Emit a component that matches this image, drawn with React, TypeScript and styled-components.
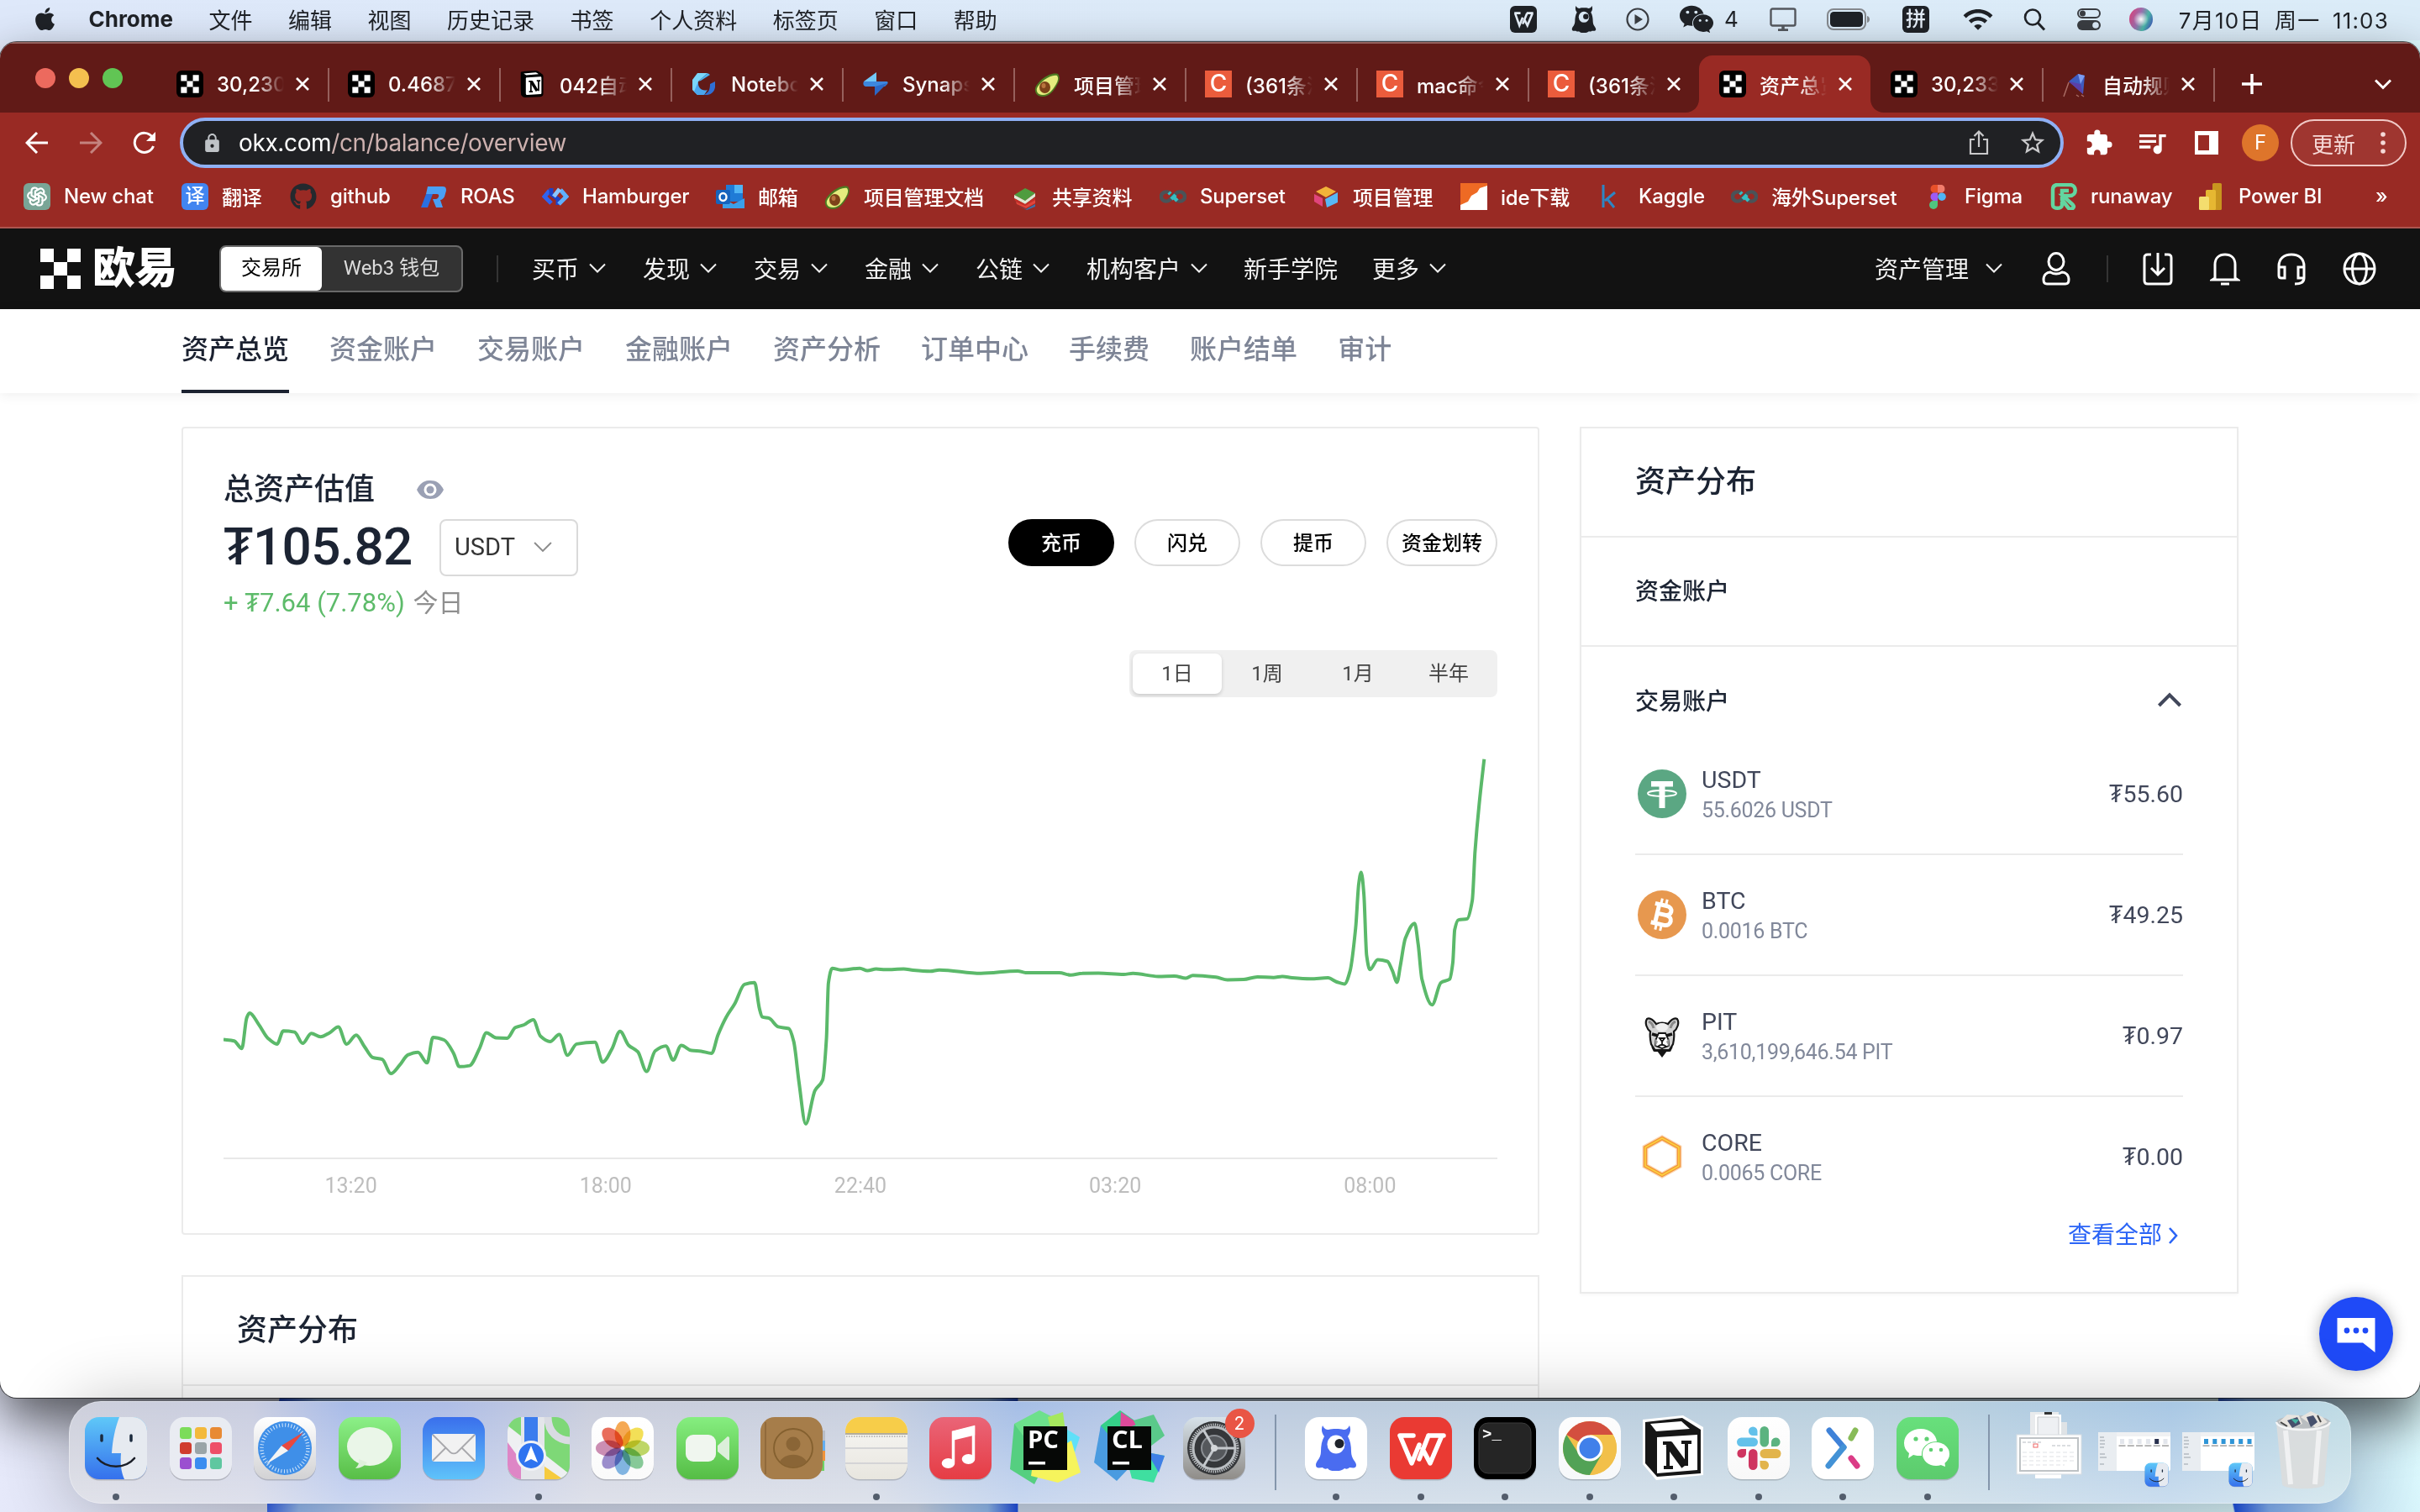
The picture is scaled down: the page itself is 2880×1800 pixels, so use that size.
import React from 'react';
import styled, { createGlobalStyle } from 'styled-components';
import { FaApple, FaGithub, FaWeixin } from 'react-icons/fa';
import { TbBrandOpenai } from 'react-icons/tb';
import { MdExtension, MdQueueMusic, MdStarBorder, MdLock, MdWifi } from 'react-icons/md';

const UI = `Inter, "Noto Sans CJK SC", sans-serif`;
const OKX = `Roboto, "Noto Sans CJK SC", "DejaVu Sans", sans-serif`;

const GlobalStyle = createGlobalStyle`
  * { box-sizing: border-box; }
  html, body { margin: 0; padding: 0; }
  body { width: 2880px; height: 1800px; overflow: hidden; font-family: ${UI}; }
  svg { display: block; flex: none; }
`;

/* ---------- desktop and menu bar ---------- */

const Desktop = styled.div`
  width: 2880px;
  height: 1800px;
  overflow: hidden;
  display: flex;
  flex-direction: column;
  background:
    linear-gradient(100deg, transparent 14px, #2350dd 15px, #8fb2e6 60px, #b9c9e8 150px, transparent 220px) 318px 1664px / 232px 136px no-repeat,
    linear-gradient(90deg, transparent, #8db4e6 70%, #1f4cd8 99%, transparent) 1090px 1664px / 122px 136px no-repeat,
    linear-gradient(78deg, transparent 18px, #1c4ed8 20px, #7eabec 60px, #c9e6f4 170px, transparent) 2640px 1664px / 240px 136px no-repeat,
    linear-gradient(90deg, #e6e9fa 0, #cfd3e4 300px, #c6cfe0 1000px, #becfe2 1500px, #bdd4e2 2400px, #d8f4f6 2800px, #dffcff 2880px);
`;

const MenuBar = styled.header`
  height: 48px;
  flex: none;
  display: flex;
  align-items: center;
  justify-content: space-between;
  padding: 0 37px 2px 38px;
  font-size: 26px;
  color: #1f2227;
  background: linear-gradient(90deg, #dee8fa, #dceaf8 50%, #dbecf8);
`;

const MenuGroup = styled.nav`
  display: flex;
  align-items: center;
  gap: 42.5px;
  padding-bottom: 2px;
`;

const MenuItem = styled.span<{ $bold?: boolean }>`
  white-space: nowrap;
  font-weight: ${p => (p.$bold ? 700 : 400)};
`;

const StatusGroup = styled.div`
  display: flex;
  align-items: center;
`;

const StatusSlot = styled.div<{ $w: number }>`
  width: ${p => p.$w}px;
  display: flex;
  align-items: center;
  justify-content: center;
`;

const UnreadCount = styled.span`
  width: 10px;
  margin: 0 9px 2px -9px;
  white-space: nowrap;
`;

const Clock = styled.span`
  width: 252px;
  margin-bottom: 2px;
  white-space: nowrap;
  letter-spacing: 1.2px;
  word-spacing: 6px;
  text-align: right;
`;

const StatusTile = styled.span`
  width: 32px;
  height: 32px;
  border-radius: 6px;
  background: #1f2227;
  color: #e6effa;
  font-size: 24px;
  font-weight: 500;
  line-height: 32px;
  text-align: center;
  display: block;
`;

/* ---------- browser window ---------- */

const Window = styled.main`
  height: 1614px;
  margin-top: 2px;
  flex: none;
  display: flex;
  flex-direction: column;
  border-radius: 20px;
  overflow: hidden;
  background: #fff;
  box-shadow: 0 0 0 1px rgba(20, 20, 20, 0.7), 0 26px 60px rgba(0, 0, 0, 0.62);
`;

const TabStrip = styled.div`
  height: 84px;
  flex: none;
  display: flex;
  align-items: flex-end;
  background: #611a17;
  box-shadow: inset 0 2px 0 #94625f;
`;

const Lights = styled.div`
  width: 186px;
  height: 86px;
  align-self: flex-start;
  display: flex;
  align-items: center;
  gap: 16px;
  padding-left: 42px;
`;

const Light = styled.span<{ $color: string }>`
  width: 24px;
  height: 24px;
  border-radius: 50%;
  background: ${p => p.$color};
`;

const TabBox = styled.div<{ $active?: boolean; $line?: boolean }>`
  position: relative;
  width: 204px;
  height: 68px;
  padding-left: 24px;
  display: flex;
  align-items: center;
  border-radius: 16px 16px 0 0;
  background: ${p => (p.$active ? '#992a24' : 'transparent')};
  color: #fff;
  &::after {
    content: '';
    position: absolute;
    right: -2px;
    top: 15px;
    width: 2px;
    height: 40px;
    background: ${p => (p.$line ? '#96605c' : 'transparent')};
  }
`;

const TabTitle = styled.span`
  width: 80px;
  margin: 0 -2px 0 16px;
  white-space: nowrap;
  font-size: 24px;
  font-weight: 500;
  mask-image: linear-gradient(90deg, #000 58%, transparent 100%);
`;

const TabClose = styled.span`
  width: 48px;
  display: flex;
  justify-content: center;
`;

const TabFoot = styled.svg<{ $side: 'left' | 'right' }>`
  position: absolute;
  bottom: 0;
  ${p => p.$side}: -16px;
  transform: ${p => (p.$side === 'right' ? 'scaleX(-1)' : 'none')};
`;

const StripButton = styled.span<{ $ml: number }>`
  height: 68px;
  display: flex;
  align-items: center;
  margin-left: ${p => p.$ml}px;
`;

const Toolbar = styled.div`
  height: 72px;
  flex: none;
  display: flex;
  align-items: center;
  padding: 0 16px 0 28px;
  background: #992a24;
`;

const NavIcon = styled.span`
  width: 32px;
  margin-right: 32px;
  display: flex;
  justify-content: center;
`;

const AddressBar = styled.div`
  width: 2242px;
  height: 60px;
  margin: 0 24px 0 -6px;
  display: flex;
  align-items: center;
  padding: 0 16px 0 22px;
  border: 4px solid #8fb0f4;
  border-radius: 30px;
  background: #202124;
  font-size: 28px;
  color: #fff;
  & > span { flex: 1; margin-left: 19px; letter-spacing: -0.37px; }
  & > span > em { font-style: normal; color: #cdb1af; }
`;

const AddressActions = styled.div`
  display: flex;
  align-items: center;
  gap: 31px;
`;

const ToolIcon = styled.span<{ $w: number }>`
  width: ${p => p.$w}px;
  display: flex;
  justify-content: center;
  color: #fff;
`;

const Avatar = styled.span`
  width: 44px;
  height: 44px;
  border-radius: 50%;
  background: #de752b;
  color: #fff;
  font-size: 24px;
  line-height: 44px;
  text-align: center;
`;

const UpdatePill = styled.div`
  width: 138px;
  height: 56px;
  margin-left: 14px;
  padding: 0 23px 0 23px;
  border: 2px solid #f0c9c6;
  border-radius: 28px;
  display: flex;
  align-items: center;
  justify-content: space-between;
  background: #9f3630;
  color: #f6dad8;
  font-size: 26px;
`;

const BookmarkBar = styled.div`
  height: 66px;
  flex: none;
  padding: 0 0 11px 28px;
  display: flex;
  align-items: center;
  background: #992a24;
  box-shadow: inset 0 -2px 0 #ad5550;
  color: #fff;
`;

const Bookmark = styled.div<{ $w: number }>`
  width: ${p => p.$w}px;
  flex: none;
  display: flex;
  align-items: center;
  gap: 16px;
  white-space: nowrap;
  font-size: 24px;
  font-weight: 500;
  letter-spacing: -0.2px;
`;

/* ---------- site header ---------- */

const SiteHeader = styled.div`
  height: 96px;
  flex: none;
  display: flex;
  align-items: center;
  padding-left: 48px;
  background: #121212;
  color: #fff;
  font-family: ${OKX};
`;

const BrandName = styled.span`
  width: 151px;
  margin-left: 14px;
  font-size: 51px;
  font-weight: 900;
  line-height: 50px;
  letter-spacing: -1px;
`;

const Switch = styled.div`
  width: 290px;
  height: 56px;
  border: 2px solid #6a6a6a;
  border-radius: 8px;
  display: flex;
  background: #333;
  font-size: 24px;
`;

const SwitchOption = styled.span<{ $on?: boolean }>`
  flex: ${p => (p.$on ? '0 0 120px' : '1')};
  line-height: 51px;
  text-align: center;
  border-radius: 6px;
  color: ${p => (p.$on ? '#000' : '#dcdcdc')};
  background: ${p => (p.$on ? '#fff' : 'transparent')};
`;

const HeaderRule = styled.span<{ $ml: number; $mr: number }>`
  width: 2px;
  height: 32px;
  margin: 0 ${p => p.$mr}px 0 ${p => p.$ml}px;
  background: #343434;
`;

const HeaderLink = styled.span<{ $w: number; $gap?: number }>`
  width: ${p => p.$w}px;
  flex: none;
  display: flex;
  align-items: center;
  gap: ${p => p.$gap ?? 12}px;
  padding-bottom: 2px;
  font-size: 28px;
  color: #f2f2f2;
  white-space: nowrap;
`;

const HeaderIcon = styled.span<{ $w: number }>`
  width: ${p => p.$w}px;
  display: flex;
  justify-content: center;
`;

const Spacer = styled.span`
  flex: 1;
`;

const SubNav = styled.nav`
  position: relative;
  height: 100px;
  flex: none;
  display: flex;
  gap: 48px;
  padding-left: 216px;
  background: #fff;
  box-shadow: 0 2px 14px rgba(0, 0, 0, 0.07);
  font-family: ${OKX};
`;

const SubNavItem = styled.span<{ $on?: boolean }>`
  height: 100px;
  line-height: 97px;
  font-size: 32px;
  font-weight: 500;
  color: ${p => (p.$on ? '#1b2130' : '#7e8596')};
  border-bottom: 4px solid ${p => (p.$on ? '#1b2130' : 'transparent')};
`;

/* ---------- content ---------- */

const Content = styled.section`
  position: relative;
  flex: 1;
  min-height: 0;
  display: flex;
  align-items: flex-start;
  gap: 48px;
  padding: 40px 0 0 216px;
  font-family: ${OKX};
  color: #1c2433;
`;

const LeftColumn = styled.div`
  width: 1616px;
  display: flex;
  flex-direction: column;
  gap: 48px;
`;

const Card = styled.div`
  border: 2px solid #ebebeb;
  border-radius: 4px;
  background: #fff;
`;

const OverviewCard = styled(Card)`
  height: 962px;
  padding: 46px 48px 0;
`;

const OverviewTop = styled.div`
  display: flex;
  justify-content: space-between;
  height: 218px;
`;

const TitleRow = styled.div`
  display: flex;
  align-items: center;
  gap: 50px;
  height: 52px;
  padding-bottom: 7px;
  font-size: 36px;
  font-weight: 500;
  & > svg { margin-top: 8px; }
`;

const AmountRow = styled.div`
  display: flex;
  align-items: center;
  height: 68px;
  margin-top: 10px;
`;

const Amount = styled.span`
  width: 257px;
  padding-bottom: 8px;
  font-size: 62px;
  font-weight: 500;
  letter-spacing: -0.6px;
  white-space: nowrap;
`;

const Tugrik = styled.span`
  font-family: "Noto Sans", "DejaVu Sans", sans-serif;
`;

const CurrencySelect = styled.div`
  width: 165px;
  height: 68px;
  padding: 0 29px 2px 16px;
  border: 2px solid #dadada;
  border-radius: 8px;
  display: flex;
  align-items: center;
  justify-content: space-between;
  font-size: 29px;
  color: #333;
`;

const Change = styled.div`
  margin-top: 12px;
  font-size: 31px;
  line-height: 36px;
  color: #5dbb6a;
  & > span:last-child { margin-left: 2px; font-size: 30px; color: #8f8f8f; }
`;

const Actions = styled.div`
  display: flex;
  gap: 24px;
  margin-top: 62px;
`;

const ActionButton = styled.button<{ $primary?: boolean; $w: number }>`
  width: ${p => p.$w}px;
  height: 56px;
  padding: 0 0 4px;
  border-radius: 28px;
  border: 2px solid ${p => (p.$primary ? '#000' : '#dcdcdc')};
  background: ${p => (p.$primary ? '#000' : '#fff')};
  color: ${p => (p.$primary ? '#fff' : '#000')};
  font: 500 24px ${OKX};
`;

const Periods = styled.div`
  width: 438px;
  height: 56px;
  margin-left: auto;
  padding: 4px;
  border-radius: 8px;
  display: flex;
  background: #f0f0f0;
`;

const Period = styled.span<{ $on?: boolean }>`
  flex: ${p => (p.$on ? '0 0 106px' : '1')};
  height: 48px;
  line-height: 48px;
  text-align: center;
  font-size: 24px;
  color: #434343;
  border-radius: 8px;
  background: ${p => (p.$on ? '#fff' : 'transparent')};
  box-shadow: ${p => (p.$on ? '0 2px 4px rgba(0,0,0,0.16)' : 'none')};
`;

const ChartArea = styled.div`
  height: 548px;
  border-bottom: 2px solid #e8e8e8;
  margin-top: 2px;
`;

const Axis = styled.div`
  display: flex;
  justify-content: space-around;
  padding-top: 15px;
  font-size: 25px;
  line-height: 34px;
  color: #bdbdbd;
`;

const DistributionCard = styled(Card)`
  height: 240px;
  border-radius: 0;
`;

const CardTitle = styled.div<{ $pl: number }>`
  height: 130px;
  padding-left: ${p => p.$pl}px;
  line-height: 129px;
  border-bottom: 2px solid #ebebeb;
  font-size: 36px;
  font-weight: 500;
`;

const AccountsCard = styled(Card)`
  width: 784px;
  height: 1032px;
  border-radius: 0;
  box-shadow: 0 2px 4px rgba(0, 0, 0, 0.03);
`;

const AccountHead = styled.div<{ $line?: boolean }>`
  height: 130px;
  padding: 0 66px 4px 64px;
  display: flex;
  align-items: center;
  justify-content: space-between;
  border-bottom: ${p => (p.$line ? '2px solid #ebebeb' : 'none')};
  font-size: 28px;
  font-weight: 500;
`;

const AssetList = styled.div`
  margin: -26px 64px 0;
`;

const AssetRow = styled.div<{ $last?: boolean }>`
  height: 144px;
  display: flex;
  align-items: center;
  padding-left: 2px;
  border-bottom: 2px solid ${p => (p.$last ? 'transparent' : '#ebebeb')};
  color: #41475a;
`;

const AssetNames = styled.div`
  flex: 1;
  margin: 3px 0 0 17px;
  display: flex;
  flex-direction: column;
  font-size: 28.5px;
  line-height: 36px;
  & > small { font-size: 25px; color: #81889a; letter-spacing: -0.3px; }
`;

const AssetValue = styled.span`
  padding-bottom: 3px;
  font-size: 28.5px;
`;

const ViewAll = styled.div`
  display: flex;
  align-items: center;
  justify-content: flex-end;
  gap: 7px;
  margin: -1px 70px 0 0;
  font-size: 28px;
  line-height: 44px;
  color: #2a64f6;
`;

const ChatBubble = styled.div`
  position: absolute;
  left: 2760px;
  top: 1076px;
  width: 88px;
  height: 88px;
  border-radius: 50%;
  background: #1f4af7;
  box-shadow: 0 0 18px rgba(0, 0, 0, 0.28);
  display: flex;
  align-items: center;
  justify-content: center;
`;

/* ---------- dock ---------- */

const DockBar = styled.footer`
  position: relative;
  width: 2716px;
  height: 122px;
  margin: 4px 0 0 82px;
  flex: none;
  padding: 0 6px;
  display: flex;
  border-radius: 38px;
  background:
    linear-gradient(180deg, rgba(255,255,255,0) 0%, rgba(255,255,255,0.4) 100%),
    linear-gradient(90deg, #cdcfdb 0, #c9cde0 220px, #a8bbe8 330px, #aebde6 450px, #c9cddc 620px, #c8cfde 950px, #a5bee6 1130px, #bccae4 1320px, #bccbde 1450px, #b9d0de 2200px, #a8c7e4 2500px, #bfdbe4 2716px);
  box-shadow: 0 0 80px rgba(0, 0, 0, 0.24), inset 0 0 0 1px rgba(255, 255, 255, 0.35);
`;

const DockSlot = styled.div`
  position: relative;
  width: 100.5px;
  height: 122px;
  padding-top: 15px;
  flex: none;
  display: flex;
  flex-direction: column;
  align-items: center;
  & > svg { overflow: visible; }
`;

const RunningDot = styled.i`
  width: 8px;
  height: 8px;
  margin-top: 13px;
  border-radius: 50%;
  background: #535d6c;
`;

const DockRule = styled.div`
  width: 45px;
  flex: none;
  display: flex;
  justify-content: center;
  padding: 16px 0;
  &::before { content: ''; width: 2px; background: #8496ac; }
`;

const DockBadge = styled.span`
  position: absolute;
  left: 63px;
  top: 9px;
  width: 35px;
  height: 35px;
  border-radius: 50%;
  background: #e95545;
  color: #fff;
  font-size: 21px;
  line-height: 35px;
  text-align: center;
`;

/* ---------- small drawings ---------- */

const Chevron = ({ size = 20, color = '#f2f2f2', width = 2, dir = 'down' }: { size?: number; color?: string; width?: number; dir?: 'down' | 'up' }) => (
  <svg width={size} height={size} viewBox="0 0 20 20">
    <path d={dir === 'down' ? 'M1 5.5 10 14.5 19 5.5' : 'M1 15 10 6 19 15'} fill="none" stroke={color} strokeWidth={(width * 20) / size} />
  </svg>
);

const Checker = ({ size, box }: { size: number; box?: boolean }) => (
  <svg width={size} height={size} viewBox={box ? '-6 -6 36 36' : '0 0 24 24'}>
    {box && <rect x="-6" y="-6" width="36" height="36" rx="7" fill="#000" />}
    <path d="M0 0h8v8H0zM16 0h8v8h-8zM8 8h8v8H8zM0 16h8v8H0zM16 16h8v8h-8z" fill="#fff" />
  </svg>
);

const NotionMark = () => (
  <svg width="32" height="32" viewBox="0 0 74 74">
    <path d="M4 6C4 3 8 2 44 0c6 0 8 2 18 9 4 3 4 4 4 8v46c0 6-2 8-8 9l-42 2c-5 0-8-3-11-7C5 61 4 58 4 52z" fill="#000" />
    <path d="M12 8 44 5c3 0 5 1 9 5l-34 3zM18 22c0-2 1-3 4-3l36-2c2 0 3 1 3 3v42c0 2-1 3-3 3l-36 2c-3 0-4-1-4-4z" fill="#fff" />
    <path d="M33 30l16 26" stroke="#000" strokeWidth="8" />
    <path d="M32 29v29M27 58h10M48 28h10M53 28v28M26 30h9" fill="none" stroke="#000" strokeWidth="4" />
  </svg>
);

const NoteMark = () => (
  <svg width="32" height="32" viewBox="0 0 32 32">
    <path d="M8 3h12L9 13c-1 5 0 9 5 11l-2 5H8L2 23V11z" fill="#7ad6fa" />
    <path d="M20 3 9 13l3-1 11-7z" fill="#4cb2f0" />
    <path d="M9 13c-1 8 5 12 11 10l-4 6H8L4 25z" fill="#4aa6ee" />
    <path d="M29 13v7c-1 5-4 8-9 9h-5c6-2 8-6 8-13z" fill="#2f6fd4" />
  </svg>
);

const BoltMark = () => (
  <svg width="32" height="32" viewBox="0 0 32 32">
    <path d="M17 2v12H3l-1-1z" fill="#72c8f8" />
    <path d="M2 13h27c2 0 2 2 1 3l-3 3H4c-3-1-3-4-2-6z" fill="#3d87de" />
    <path d="M30 15 15 30V19z" fill="#2c68c6" />
  </svg>
);

const Avocado = () => (
  <svg width="32" height="32" viewBox="0 0 32 32">
    <path d="M29 4c3 4 2 8-1 13-4 8-10 14-17 14C4 31 1 26 2 21 5 12 20 1 29 4z" fill="#4d7a22" />
    <path d="M28 6c2 3 1 6-1 10-4 7-9 13-16 13-6 0-8-4-7-8C7 14 20 4 28 6z" fill="#e5ec7e" />
    <ellipse cx="13.500" cy="20" rx="6.500" ry="7" fill="#7d4219" />
    <ellipse cx="12" cy="18" rx="2.500" ry="3" fill="#b9743e" />
  </svg>
);

const LetterTile = styled.span<{ $bg: string; $size?: number; $radius?: number }>`
  width: 32px;
  height: 32px;
  flex: none;
  border-radius: ${p => p.$radius ?? 0}px;
  background: ${p => p.$bg};
  color: #fff;
  font-size: ${p => p.$size ?? 26}px;
  font-weight: 500;
  line-height: 31px;
  text-align: center;
  & > svg { margin: 3px; }
`;

const Kite = () => (
  <svg width="32" height="32" viewBox="0 0 32 32">
    <path d="M19 4 27 6 25 28 8 13z" fill="#3e5cc0" />
    <path d="M19 4l8 2-5 10z" fill="#7c9cf0" />
    <path d="M8 13l14 3 3 12z" fill="#5a3fa8" />
    <path d="M8 14 2 31M17 29l3 2M23 29l3 2" stroke="#a86a62" strokeWidth="1.500" fill="none" />
  </svg>
);

const CloseX = () => (
  <svg width="18" height="18" viewBox="0 0 18 18">
    <path d="M2 2l14 14M16 2 2 16" stroke="#fff" strokeWidth="2.600" />
  </svg>
);

const RMark = () => (
  <svg width="32" height="32" viewBox="0 0 32 32">
    <path d="M9 4h18c4 0 4 3 4 5l-2 7c-1 2-3 4-5 4l3 9h-8l-4-10h4c3 0 5-6 1-6H7z" fill="#4aa0f5" />
    <path d="M7 13h8L9 29H1z" fill="#2a6fe0" />
  </svg>
);

const Braid = () => (
  <svg width="32" height="32" viewBox="0 0 32 32" fill="none" strokeWidth="5">
    <path d="M9 9 3 16l8 8" stroke="#2f62ef" />
    <path d="M11 6v7l8 6v7" stroke="#1d43c8" />
    <path d="M22 8l7 8-9 9" stroke="#5fb0ff" />
    <path d="M21 7l-7 9" stroke="#8ac6ff" />
  </svg>
);

const Outlook = () => (
  <svg width="34" height="32" viewBox="0 0 34 32">
    <path d="M12 2h20v20H12z" fill="#1f7bd6" />
    <path d="M22 2h10v10H22z" fill="#4fb4f4" />
    <path d="M8 18l13 7 13-7v12H8z" fill="#3ba0ea" />
    <rect y="8" width="17" height="17" rx="2" fill="#1664bd" />
    <ellipse cx="8.500" cy="16.500" rx="4" ry="4.500" fill="none" stroke="#fff" strokeWidth="2.400" />
  </svg>
);

const Books = () => (
  <svg width="32" height="32" viewBox="0 0 32 32">
    <path d="M3 14 16 6l12 6-12 9z" fill="#4f9c3f" />
    <path d="M3 14v4l13 7 12-9v-4l-12 9z" fill="#dfe9d6" />
    <path d="M3 18l13 7 12-8v3l-12 7L4 21z" fill="#c52f28" />
    <path d="M5 22l11 5 12-7v4l-11 6-11-5z" fill="#e2443a" />
    <path d="M8 27l9 4 11-6v3l-10 4z" fill="#3d6fa8" />
  </svg>
);

const Infinity2 = () => (
  <svg width="32" height="32" viewBox="0 0 32 32" fill="none" strokeWidth="4.500">
    <path d="M12 12a6 5.500 0 1 0 0 8l8-8a6 5.500 0 1 1 0 8" stroke="#4a5358" />
    <path d="M13 13l-2-2M21 21l-3-3M14 19l5-5" stroke="#35bfc4" />
  </svg>
);

const Cubes = () => (
  <svg width="32" height="32" viewBox="0 0 32 32">
    <path d="M16 4l12 6-12 7L4 10z" fill="#f2b33a" />
    <path d="M2 13l10 5v10L2 22z" fill="#e0457c" />
    <path d="M15 19l15-8v12l-13 6z" fill="#58b8f5" />
  </svg>
);

const PeaksMark = () => (
  <svg width="32" height="32" viewBox="0 0 32 32">
    <path d="M0 0h32v32H0z" fill="#ee6a24" />
    <path d="M0 32V26l9-4 4-7 7-4 3-5 9-3v29z" fill="#fff" />
  </svg>
);

const KaggleK = () => (
  <svg width="32" height="32" viewBox="0 0 32 32" fill="none" stroke="#2d86c4" strokeWidth="3">
    <path d="M6 2v27M20 11 8 21M10 18l9 11" />
  </svg>
);

const FigmaMark = () => (
  <svg width="32" height="32" viewBox="0 0 32 32">
    <path d="M16 2h-5a5 5 0 0 0 0 9.500h5z" fill="#e8512a" />
    <path d="M16 2h5a5 5 0 0 1 0 9.500h-5z" fill="#f27c6b" />
    <path d="M16 11.500h-5a5 5 0 0 0 0 9.500h5z" fill="#9d5bf5" />
    <circle cx="21" cy="16.200" r="4.800" fill="#4fb4f5" />
    <path d="M16 21h-5a5 5 0 1 0 5 5z" fill="#4fc47f" />
  </svg>
);

const RunwayMark = () => (
  <svg width="32" height="32" viewBox="0 0 32 32" fill="none" stroke="#62d6a0" strokeWidth="4.500">
    <path d="M14 22v4c0 5-11 5-11 0V8c0-4 2-6 6-6h14c9 0 9 13 0 13h-8l12 11c3 3-2 6-5 4L14 20V9h8" />
  </svg>
);

const PowerBi = () => (
  <svg width="32" height="32" viewBox="0 0 32 32">
    <rect x="17" y="0" width="11" height="32" rx="1.500" fill="#c8951f" />
    <rect x="9" y="8" width="12" height="24" rx="1.500" fill="#e6b732" />
    <rect x="1" y="16" width="12" height="16" rx="1.500" fill="#f4dd6e" />
  </svg>
);

const Monster = ({ size, color, eye }: { size: number; color: string; eye: string }) => (
  <svg width={size} height={size} viewBox="0 0 54 54">
    <path d="M11 0c2 4 4 5 7 5 3-1 5-1 9-1s6 0 9 1c3 0 5-1 7-5 2 5 1 9-2 13 3 5 4 11 4 18 0 9 6 12 6 16 0 5-5 3-8 3-2 2-4 2-6 1-3 4-17 5-20 0-2 1-4 1-6-1-3 0-8 2-8-3s6-7 6-16c0-7 1-13 4-18-3-4-4-8-2-13z" fill={color} />
    <ellipse cx="27" cy="22.500" rx="10.500" ry="11" fill={eye} />
    <ellipse cx="31" cy="21.500" rx="5.500" ry="5.500" fill={color === '#1f2227' ? color : '#20242c'} />
  </svg>
);

/* ---------- chart ---------- */

type Point = [number, number];

const toPixels = (x0: number, unit: number, pts: Point[]): Point[] =>
  pts.map(([t, v]) => [x0 + t / unit, v / 2.45 + 28]);

const series: Point[] = [
  ...toPixels(-66, 1.742, [
    [115, 925], [137, 929], [153, 951], [163, 862], [169, 848], [188, 881], [207, 921], [226, 938], [239, 900], [262, 903],
    [279, 936], [297, 907], [316, 917], [335, 905], [353, 888], [370, 938], [390, 912], [407, 945], [424, 977], [444, 983],
    [462, 1024], [480, 1000], [497, 970], [518, 962], [537, 993], [549, 919], [572, 926], [592, 965], [604, 1004], [625, 1001],
    [646, 950], [660, 905], [680, 920], [703, 921], [720, 890], [738, 882], [757, 867], [772, 915], [792, 931], [811, 910],
    [828, 971], [847, 938], [885, 933], [901, 991], [920, 953], [937, 901], [955, 942], [974, 961], [992, 1018], [1010, 958],
    [1032, 944], [1047, 985], [1064, 942], [1085, 957], [1105, 959], [1127, 965], [1140, 912], [1157, 860], [1175, 820],
    [1195, 764], [1216, 759], [1226, 835], [1232, 859], [1246, 863], [1265, 888], [1287, 893], [1297, 930], [1308, 1050],
    [1322, 1171], [1341, 1074], [1357, 1043], [1365, 920], [1369, 760], [1377, 717], [1394, 722], [1434, 717], [1450, 724],
    [1468, 719], [1487, 721], [1525, 719], [1545, 723],
  ]),
  ...toPixels(734, 1.823, [
    [195, 726], [215, 722], [305, 732], [385, 725], [402, 730], [475, 730], [500, 737], [525, 732], [560, 731], [615, 735],
    [635, 732], [690, 741], [725, 740], [750, 746], [765, 738], [815, 743], [840, 751], [875, 750], [905, 742], [940, 744],
    [960, 741], [980, 745], [1020, 748], [1058, 745], [1077, 757], [1094, 763], [1106, 725], [1118, 600], [1125, 470],
    [1130, 437], [1136, 500], [1142, 680], [1149, 721], [1166, 692], [1187, 697], [1198, 725], [1208, 758], [1215, 710],
    [1226, 630], [1246, 586], [1254, 650], [1262, 750], [1284, 824], [1303, 759], [1322, 749], [1329, 700], [1333, 605],
    [1341, 576], [1360, 573], [1371, 520], [1377, 380], [1386, 240], [1397, 107],
  ]),
];

/* Monotone cubic interpolation, so peaks never overshoot their samples. */
const smoothPath = (pts: Point[]): string => {
  const n = pts.length;
  const slope = (i: number) => (pts[i + 1][1] - pts[i][1]) / (pts[i + 1][0] - pts[i][0]);
  const tangent = (i: number) => {
    if (i === 0) return slope(0);
    if (i === n - 1) return slope(n - 2);
    const a = slope(i - 1);
    const b = slope(i);
    return a * b <= 0 ? 0 : (2 * a * b) / (a + b);
  };
  let d = `M${pts[0][0].toFixed(1)} ${pts[0][1].toFixed(1)}`;
  for (let i = 0; i < n - 1; i++) {
    const [x0, y0] = pts[i];
    const [x1, y1] = pts[i + 1];
    const h = (x1 - x0) / 3;
    const c = [x0 + h, y0 + h * tangent(i), x1 - h, y1 - h * tangent(i + 1), x1, y1];
    d += `C${c.map(v => v.toFixed(1)).join(' ')}`;
  }
  return d;
};

const Chart = () => (
  <svg width="1516" height="540" viewBox="0 0 1516 540">
    <path d={smoothPath(series)} fill="none" stroke="#5bb96a" strokeWidth="4" strokeLinejoin="round" />
  </svg>
);

/* ---------- coin icons ---------- */

const Tether = () => (
  <svg width="60" height="60" viewBox="0 0 60 60">
    <circle cx="30" cy="30" r="29" fill="#5ba783" />
    <path d="M17 15h26v6.500h-9.500V47h-7V21.500H17z" fill="#fff" />
    <ellipse cx="30" cy="29.500" rx="17" ry="3.500" fill="none" stroke="#fff" strokeWidth="1.800" />
  </svg>
);

const Bitcoin = () => (
  <svg width="60" height="60" viewBox="0 0 60 60">
    <circle cx="30" cy="30" r="29" fill="#e7984f" />
    <g transform="rotate(13 30 30)" fill="none" stroke="#fff">
      <path d="M19 18.500h14c9 0 9 11 0 11H24M24 29.500h11c9 0 9 12 0 12H19M24 18.500v23" strokeWidth="5" />
      <path d="M26 11v7M32 11v7M26 42v7M32 42v7" strokeWidth="3" />
    </g>
  </svg>
);

const PitDog = () => (
  <svg width="60" height="60" viewBox="0 0 60 60">
    <path d="M12 10c4-2 8 2 11 6 4-2 10-2 14 0 3-4 7-8 11-6 3 5 0 12-4 15 1 6 0 10-1 15l-5 8H22l-5-8c-1-5-2-9-1-15-4-3-7-10-4-15z" fill="#d2d2d2" stroke="#151515" strokeWidth="2.200" />
    <path d="M14 13c3 1 5 4 6 8M46 13c-3 1-5 4-6 8" stroke="#8a8a8a" strokeWidth="3" fill="none" />
    <ellipse cx="30" cy="20" rx="7" ry="5" fill="#efefef" />
    <path d="M18 28l7 2M42 28l-7 2" stroke="#151515" strokeWidth="3.500" />
    <path d="M26 27h8l4 9v6l-8 3-8-3v-6z" fill="#fff" stroke="#151515" strokeWidth="1.800" />
    <path d="M21 33l4 4-3 6zM39 33l-4 4 3 6z" fill="#999" />
    <path d="M27 33h6l-3 4zM30 37v4M25 43c3-3 7-3 10 0" fill="none" stroke="#151515" strokeWidth="1.800" />
    <path d="M17 43l3 6 4-1 3 4 3 4 3-4 3-4 4 1 3-6-5 3H22z" fill="#151515" />
  </svg>
);

const CoreCoin = () => (
  <svg width="60" height="60" viewBox="0 0 60 60" fill="none">
    <path d="M30 8 50 19v22L30 52 10 41V19z" stroke="#fbd9b8" strokeWidth="7" />
    <path d="M30 8 50 19v22L30 52 10 41V19z" stroke="#f3973a" strokeWidth="4.500" />
    <path d="M30 8 50 19v22L30 52 10 41V19z" stroke="#fbd03f" strokeWidth="1.600" />
  </svg>
);

/* ---------- dock icons ---------- */

const Tile = ({ id, from, to, children }: { id: string; from: string; to: string; children?: React.ReactNode }) => (
  <svg width="82" height="82" viewBox="-4 0 82 82">
    <defs>
      <linearGradient id={id} x1="0" y1="0" x2="0" y2="1">
        <stop offset="0" stopColor={from} />
        <stop offset="1" stopColor={to} />
      </linearGradient>
      <clipPath id={`${id}-clip`}><rect y="4" width="74" height="74" rx="17" /></clipPath>
    </defs>
    <rect y="5.500" width="74" height="74" rx="17" fill="rgba(0,0,0,0.18)" />
    <rect y="4" width="74" height="74" rx="17" fill={`url(#${id})`} />
    <g clipPath={`url(#${id}-clip)`}><g transform="translate(0 4)">{children}</g></g>
  </svg>
);

const FinderFace = ({ id }: { id: string }) => (
  <Tile id={id} from="#5fc8f8" to="#3570ec">
    <path d="M41 0C36 13 33 27 32 43h11c-1 12 0 22 4 31h27V0z" fill="#e6eaf0" />
    <path d="M20 22v6M55 22v6" stroke="#1b2a3d" strokeWidth="3.500" strokeLinecap="round" />
    <path d="M15 49c11 13 33 13 44 0" fill="none" stroke="#1b1f28" strokeWidth="2.600" strokeLinecap="round" />
  </Tile>
);

const launchColors = ['#7cdc5a', '#f3b93c', '#e88a34', '#d03c2e', '#9aa4a8', '#ee4f68', '#9b4fd0', '#3b8cf0', '#5fc7a0'];
const Launchpad = () => (
  <Tile id="launch" from="#e9ecf2" to="#e9ebf2">
    {launchColors.map((c, i) => (
      <rect key={c} x={12 + (i % 3) * 18} y={12 + Math.floor(i / 3) * 18} width="14" height="14" rx="3.500" fill={c} />
    ))}
  </Tile>
);

const Safari = () => (
  <Tile id="safari" from="#ffffff" to="#d2d2d4">
    <circle cx="37" cy="37" r="32" fill="#3f8fe8" />
    <circle cx="37" cy="37" r="27.500" fill="none" stroke="#d7e9fb" strokeWidth="4.500" strokeDasharray="1 2.600" />
    <path d="M59 18 33 34l8 6z" fill="#e8483e" />
    <path d="M15 56l18-22 8 6z" fill="#f4f4f4" />
  </Tile>
);

const Messages = () => (
  <Tile id="messages" from="#8cf088" to="#58be47">
    <ellipse cx="37" cy="35" rx="27" ry="23" fill="#eaf6e8" />
    <path d="M24 50c1 5-1 8-4 11 6 0 11-3 14-7z" fill="#dff0dc" />
  </Tile>
);

const Mail = () => (
  <Tile id="mail" from="#3a6fec" to="#5fc3fa">
    <rect x="11" y="20" width="52" height="33" rx="3" fill="#f2f2f2" />
    <path d="M12 21 33 42c3 2 5 2 8 0l21-21M12 52l16-16M62 52 46 36" fill="none" stroke="#a8a8ac" strokeWidth="1.800" />
  </Tile>
);

const Maps = () => (
  <Tile id="maps" from="#7ed877" to="#7ed877">
    <path d="M0 10 74 68v6H0z" fill="#eef0f2" />
    <path d="M0 30 32 74H0z" fill="#de86c6" />
    <path d="M40 56l26 18H40z" fill="#f6cb3f" />
    <path d="M16 0h28v74H16z" fill="#e4e6ea" />
    <path d="M20 0h16v45H20z" fill="#3b7cee" />
    <path d="M48 0c0 18 12 28 28 28" fill="none" stroke="#d9dbe2" strokeWidth="9" />
    <circle cx="28" cy="46" r="18" fill="#f0f2f6" />
    <circle cx="28" cy="46" r="15" fill="#2f74f0" />
    <path d="M28 34l8 20-8-4-8 4z" fill="#fff" />
  </Tile>
);

const petals = ['#f39a37', '#f1d93a', '#b3cf4c', '#72bf86', '#6ba7dc', '#8a79c3', '#c27aa6', '#e5553f'];
const Petal = styled.ellipse`
  mix-blend-mode: multiply;
`;
const Photos = () => (
  <Tile id="photos" from="#ffffff" to="#fafafa">
    {petals.map((c, i) => (
      <Petal key={c} cx="37" cy="20" rx="9.500" ry="15" fill={c} fillOpacity="0.85" transform={`rotate(${i * 45} 37 37)`} />
    ))}
  </Tile>
);

const FaceTime = () => (
  <Tile id="facetime" from="#86ee80" to="#55bd45">
    <rect x="11" y="21" width="36" height="32" rx="9" fill="#f0f6ef" />
    <path d="M49 34 61 23c1 0 2 1 2 2v25c0 1-1 2-2 1L49 41z" fill="#dcefda" />
  </Tile>
);

const Contacts = () => (
  <svg width="82" height="82" viewBox="-4 0 82 82">
    <path d="M68 20h9v16h-9z" fill="#b8bdc6" /><path d="M68 32h9v14h-9z" fill="#63aef0" />
    <path d="M68 44h9v12h-9z" fill="#f0933a" /><path d="M68 56h8v12h-8z" fill="#6fd364" />
    <rect y="4" width="74" height="74" rx="17" fill="#a67d4a" />
    <path d="M6 10v62" stroke="#8a6538" strokeWidth="1.500" />
    <circle cx="39" cy="41" r="23" fill="none" stroke="#84602f" strokeWidth="1.800" />
    <circle cx="39" cy="36" r="8.500" fill="#8a6536" />
    <path d="M23 57c6-11 26-11 32 0-8 9-24 9-32 0z" fill="#8a6536" />
  </svg>
);

const Notes = () => (
  <Tile id="notes" from="#f8f7f5" to="#e8e6df">
    <path d="M0 0h74v19H0z" fill="#f7cd49" />
    <path d="M0 20h74" stroke="#9c9480" strokeWidth="1.500" />
    <path d="M1 23h72" stroke="#aaa" strokeWidth="1.500" strokeDasharray="1.500 1.500" />
    <path d="M0 37h74M0 55h74" stroke="#d4d4d6" strokeWidth="1.800" />
  </Tile>
);

const Music = () => (
  <Tile id="music" from="#ea6578" to="#e63c44">
    <path d="M28.500 54V18l24-6v37" fill="none" stroke="#fff" strokeWidth="3.500" />
    <path d="M27 17 54.200 10.500v11L27 28z" fill="#fff" />
    <ellipse cx="22.500" cy="55" rx="7.800" ry="6" fill="#fff" />
    <ellipse cx="46.500" cy="50" rx="7.800" ry="6" fill="#fff" />
  </Tile>
);

const JetBrains = ({ label, shards }: { label: string; shards: [string, string][] }) => (
  <svg width="82" height="82" viewBox="0 0 82 82">
    {shards.map(([d, c]) => <path key={d} d={d} fill={c} />)}
    <rect x="15" y="15" width="52" height="52" fill="#060806" />
    <text x="20" y="41" fill="#fff" fontFamily="Open Sans, sans-serif" fontWeight="700" fontSize="28" textLength="37" lengthAdjust="spacingAndGlyphs">{label}</text>
    <rect x="21" y="57" width="20" height="3.500" fill="#fff" />
  </svg>
);

const Settings = () => (
  <Tile id="settings" from="#d7e2ea" to="#8f8c88">
    <circle cx="37" cy="37" r="32" fill="#35373a" />
    <circle cx="37" cy="37" r="28" fill="none" stroke="#c0c4c8" strokeWidth="3" strokeDasharray="1.300 1.300" />
    <circle cx="37" cy="37" r="25" fill="none" stroke="#b9bdc1" strokeWidth="3" />
    <circle cx="37" cy="37" r="15" fill="#55585c" stroke="#8b8f94" strokeWidth="2" />
    <path d="M37 37 24 15M37 37h26M37 37 24 59" stroke="#c4c8cc" strokeWidth="3" />
    <circle cx="37" cy="37" r="4" fill="#d5d8db" />
  </Tile>
);

const Wps = () => (
  <Tile id="wps" from="#ea3a33" to="#ea3a33">
    <path d="M12 22h16M12 22l14 33 9-22M46 22h18M62 22 48 55 39 38M46 22 35 50" fill="none" stroke="#fff" strokeWidth="5.500" strokeLinejoin="round" strokeLinecap="round" />
  </Tile>
);

const Terminal = () => (
  <Tile id="term" from="#000" to="#000">
    <rect x="6" y="7" width="62" height="60" rx="11" fill="#252525" stroke="#3c3c3c" />
    <text x="10" y="26" fill="#fff" fontFamily="Liberation Mono, monospace" fontWeight="700" fontSize="19">&gt;_</text>
  </Tile>
);

const ChromeIcon = () => (
  <Tile id="chrome" from="#fdfdfd" to="#f6f8fa">
    <circle cx="37" cy="37" r="32" fill="#f2c04a" />
    <path d="M37 37 9.300 21A32 32 0 0 1 64.700 21z" fill="#d34f3f" />
    <path d="M37 37 37 69A32 32 0 0 1 9.300 21L24 44z" fill="#52a256" />
    <path d="M37 69 51 45 37 52 24 44z" fill="#52a256" />
    <path d="M37 21h27.700A32 32 0 0 1 37 69l14-24z" fill="#f2c04a" />
    <circle cx="37" cy="37" r="15.500" fill="#fff" />
    <circle cx="37" cy="37" r="12.500" fill="#4080ea" />
  </Tile>
);

const NotionDock = () => (
  <svg width="82" height="82" viewBox="0 0 82 82">
    <path d="M4 7 52 2l24 14v57l-56 6L4 60z" fill="#fff" />
    <path d="M7 10 51 5l22 14v52l-52 4L7 59z" fill="#161616" />
    <path d="M13 12 50 9l10 9-40 3zM21 28l48-3v42l-48 4z" fill="#fff" />
    <path d="M35 36l19 26" stroke="#161616" strokeWidth="9" />
    <path d="M34 34v30M29 64h11M50 34h12M56 34v28M28 35h10" stroke="#161616" strokeWidth="4" />
  </svg>
);

const Slack = () => (
  <Tile id="slack" from="#ffffff" to="#f8f8f8">
    <g fill="#63c1ea"><rect x="11" y="24.500" width="25" height="10.500" rx="5.250" /><path d="M35.500 22h-5a5.300 5.300 0 1 1 5-5.300z" /></g>
    <g fill="#5bb380"><rect x="38.500" y="11" width="10.500" height="24.500" rx="5.250" /><path d="M52 35v-5a5.300 5.300 0 1 1 5.300 5z" /></g>
    <g fill="#e2b44c"><rect x="38.500" y="38" width="25" height="11" rx="5.500" /><path d="M38.500 52h5a5.300 5.300 0 1 1-5 5.300z" /></g>
    <g fill="#cf3560"><rect x="25" y="38" width="10.500" height="25" rx="5.250" /><path d="M22 38v5a5.300 5.300 0 1 1-5.300-5z" /></g>
  </Tile>
);

const XApp = () => (
  <Tile id="xapp" from="#fff" to="#fff">
    <g fill="none" strokeWidth="7" strokeLinecap="round" strokeLinejoin="round">
      <path d="M21 16 38 36" stroke="#3f82d8" />
      <path d="M38 36 20 58" stroke="#4392d6" />
      <path d="M52 16l-5 9" stroke="#88bb58" />
      <path d="M47 49l7 9" stroke="#db3c86" />
    </g>
  </Tile>
);

const WeChat = () => (
  <Tile id="wechat" from="#68e07c" to="#5ccb6d">
    <path d="M9 31C9 21 18 14 29 14s18 7 19 15c-11 0-19 7-18 17-4 0-7 0-10-1l-6 4 1-6c-4-3-6-7-6-12z" fill="#fff" />
    <ellipse cx="47" cy="44" rx="16" ry="14" fill="#fff" /><path d="M50 56l8 3-1-8z" fill="#fff" />
    <circle cx="23" cy="26" r="2.600" fill="#5fd172" /><circle cx="36" cy="26" r="2.600" fill="#5fd172" />
    <circle cx="41" cy="39" r="2.300" fill="#5fd172" /><circle cx="53" cy="39" r="2.300" fill="#5fd172" />
  </Tile>
);

const WindowStack = () => (
  <svg width="82" height="82" viewBox="0 0 82 82">
    <path d="M18-2h34v28H18z" fill="#e9ebed" /><path d="M54 10h8v16h-8z" fill="#dfe3e6" />
    <path d="M24 1h31v76H24z" fill="#fff" /><path d="M27 4h25v22H27z" fill="#eef0f3" stroke="#c6c9cd" />
    <path d="M35-2h9v3h-9z" fill="#333" />
    <rect x="2" y="25" width="77" height="47" fill="#fdfdfd" stroke="#d7dde2" />
    <rect x="6" y="29" width="69" height="39" fill="#fff" stroke="#bfc3c6" strokeWidth="2" />
    <path d="M9 46h62M9 51h62M9 56h62M9 61h50" stroke="#e0e2e5" strokeWidth="1.200" strokeDasharray="5 3" />
    <path d="M9 34h22M44 38h24" stroke="#cfd2d6" strokeWidth="1.500" strokeDasharray="4 2" />
    <rect x="22" y="36" width="5" height="4" fill="none" stroke="#e66" />
  </svg>
);

const FinderWindow = ({ id, blue }: { id: string; blue?: boolean }) => (
  <svg width="86" height="82" viewBox="0 0 86 82">
    <rect y="22" width="86" height="46" rx="2" fill="#fff" />
    <path d="M0 22h22v46H0z" fill="#e9edf1" /><path d="M22 22h64v5H22z" fill="#f0f1f3" />
    <path d="M2 28h5M2 32h6M2 36h6M2 40h5M2 48h6M2 52h8M2 60h5" stroke="#b4bac1" strokeWidth="1.300" />
    {[0, 1, 2, 3, 4, 5].map(i => (
      <g key={i}>
        <rect x={26 + i * 10.3} y="30" width="5" height="6" fill={blue ? '#2f95d6' : i === 4 ? '#28304e' : '#e3e6ec'} />
        <rect x={24.5 + i * 10.3} y="37.500" width="8" height="1.200" fill="#888" />
      </g>
    ))}
    <g transform="translate(54 57) scale(0.38)"><FinderFace id={id} /></g>
  </svg>
);

const Trash = () => (
  <svg width="82" height="90" viewBox="0 4 82 90">
    <path d="M9 14 73 14 66 88c-1 7-49 7-50 0z" fill="#dadcdd" fillOpacity="0.95" />
    <path d="M20 24l6 64M60 24l-5 64" stroke="#f0f1f2" strokeWidth="6" />
    <ellipse cx="41" cy="14" rx="32" ry="8" fill="#b9bdc0" />
    <path d="M12 14 22 5l14 1 4 10-14 6zM38 8l12-7 14 7 6 6-14 7z" fill="#e7e4df" />
    <path d="M22 12l12-4 4 8-10 5zM45 8l8-2 5 8-8 6z" fill="#47516d" />
    <path d="M26 10l10 1-4 5z" fill="#45b3a2" /><path d="M14 14l8 5M58 6l4 8" stroke="#444" strokeWidth="2" />
    <path d="M9 14c3 12 61 12 64 0" fill="none" stroke="#f5f6f7" strokeWidth="2.500" />
  </svg>
);

/* ---------- data ---------- */

const menus = ['文件', '编辑', '视图', '历史记录', '书签', '个人资料', '标签页', '窗口', '帮助'];

const csdn = <LetterTile $bg="#eb5c3c" $size={28}>C</LetterTile>;
const tabs: { icon: React.ReactNode; title: string; active?: boolean }[] = [
  { icon: <Checker size={32} box />, title: '30,230' },
  { icon: <Checker size={32} box />, title: '0.4687' },
  { icon: <NotionMark />, title: '042自动' },
  { icon: <NoteMark />, title: 'Notebo' },
  { icon: <BoltMark />, title: 'Synaps' },
  { icon: <Avocado />, title: '项目管理' },
  { icon: csdn, title: '(361条消' },
  { icon: csdn, title: 'mac命令' },
  { icon: csdn, title: '(361条消' },
  { icon: <Checker size={32} box />, title: '资产总览', active: true },
  { icon: <Checker size={32} box />, title: '30,233' },
  { icon: <Kite />, title: '自动规则' },
];

const bookmarks: [React.ReactNode, string, number][] = [
  [<LetterTile $bg="#79a596" $radius={6}><TbBrandOpenai size={26} /></LetterTile>, 'New chat', 188],
  [<LetterTile $bg="#4285f0" $radius={6} $size={23}>译</LetterTile>, '翻译', 129],
  [<FaGithub size={32} color="#24292e" />, 'github', 155],
  [<RMark />, 'ROAS', 145],
  [<Braid />, 'Hamburger', 207],
  [<Outlook />, '邮箱', 128],
  [<Avocado />, '项目管理文档', 224],
  [<Books />, '共享资料', 176],
  [<Infinity2 />, 'Superset', 182],
  [<Cubes />, '项目管理', 176],
  [<PeaksMark />, 'ide下载', 164],
  [<KaggleK />, 'Kaggle', 158],
  [<Infinity2 />, '海外Superset', 230],
  [<FigmaMark />, 'Figma', 150],
  [<RunwayMark />, 'runaway', 176],
  [<PowerBi />, 'Power BI', 211],
];

const links: [string, number, boolean][] = [
  ['买币', 132, true], ['发现', 132, true], ['交易', 132, true], ['金融', 132, true], ['公链', 132, true],
  ['机构客户', 187, true], ['新手学院', 153, false], ['更多', 90, true],
];

const subnav = ['资产总览', '资金账户', '交易账户', '金融账户', '资产分析', '订单中心', '手续费', '账户结单', '审计'];

const assets: { icon: React.ReactNode; name: string; qty: string; value: string }[] = [
  { icon: <Tether />, name: 'USDT', qty: '55.6026 USDT', value: '55.60' },
  { icon: <Bitcoin />, name: 'BTC', qty: '0.0016 BTC', value: '49.25' },
  { icon: <PitDog />, name: 'PIT', qty: '3,610,199,646.54 PIT', value: '0.97' },
  { icon: <CoreCoin />, name: 'CORE', qty: '0.0065 CORE', value: '0.00' },
];

const pcShards: [string, string][] = [
  ['M4 12 34-4 54 6 40 40 8 60z', '#6de08c'], ['M4 12-1 66 28 84 40 60z', '#55cf80'],
  ['M44 4 62-2 66 30 50 30z', '#a6e85e'], ['M66 18 82 28 74 52 60 44z', '#5fe0f8'],
  ['M72 32 83 70 56 82 24 74 26 60z', '#f6f45c'],
];
const clShards: [string, string][] = [
  ['M7 14 30-4 50 10 40 50 4 50z', '#35d088'], ['M31-2 52 12 30 20z', '#dd4a9a'],
  ['M46 8 70 1 83 26 62 42z', '#5ac98a'], ['M7 14-1 58 26 80 45 60z', '#4a9be0'],
  ['M62 46 83 50 70 82 44 77 40 62z', '#3fdfa0'], ['M62 46 83 50 76 70z', '#3f7fe6'],
];

const dockLeft: { icon: React.ReactNode; on?: boolean; badge?: string }[] = [
  { icon: <FinderFace id="finder" />, on: true }, { icon: <Launchpad /> }, { icon: <Safari /> }, { icon: <Messages /> },
  { icon: <Mail /> }, { icon: <Maps />, on: true }, { icon: <Photos /> }, { icon: <FaceTime /> }, { icon: <Contacts /> },
  { icon: <Notes />, on: true }, { icon: <Music /> }, { icon: <JetBrains label="PC" shards={pcShards} /> },
  { icon: <JetBrains label="CL" shards={clShards} /> }, { icon: <Settings />, badge: '2' },
];
const dockMid: React.ReactNode[] = [
  <Tile id="monster" from="#fff" to="#fff"><g transform="translate(10 10)"><Monster size={54} color="#4a6cf0" eye="#fff" /></g></Tile>,
  <Wps />, <Terminal />, <ChromeIcon />, <NotionDock />, <Slack />, <XApp />, <WeChat />,
];
const dockRight: React.ReactNode[] = [<WindowStack />, <FinderWindow id="fw1" />, <FinderWindow id="fw2" blue />, <Trash />];

/* ---------- page ---------- */

const AppleMark = styled(FaApple)`
  margin-right: -6px;
`;

const TopMenu = () => (
  <MenuBar>
    <MenuGroup>
      <AppleMark size={31} />
      <MenuItem $bold>Chrome</MenuItem>
      {menus.map(m => <MenuItem key={m}>{m}</MenuItem>)}
    </MenuGroup>
    <StatusGroup>
      <StatusSlot $w={72}>
        <StatusTile>
          <svg width="32" height="32" viewBox="0 0 74 74"><path d="M12 20h17M14 20l12 34 9-22M46 20h18M62 20 48 54 39 36M47 20 35 50" fill="none" stroke="#e6effa" strokeWidth="6" /></svg>
        </StatusTile>
      </StatusSlot>
      <StatusSlot $w={72}><Monster size={32} color="#1f2227" eye="#dcebf8" /></StatusSlot>
      <StatusSlot $w={56}>
        <svg width="28" height="28" viewBox="0 0 28 28"><circle cx="14" cy="14" r="12.500" fill="none" stroke="#3a3d42" strokeWidth="2.200" /><path d="M10.500 8 20 14l-9.500 6z" fill="#3a3d42" /></svg>
      </StatusSlot>
      <StatusSlot $w={84}><FaWeixin size={42} /></StatusSlot>
      <UnreadCount>4</UnreadCount>
      <StatusSlot $w={102}>
        <svg width="32" height="28" viewBox="0 0 32 28"><rect x="1.500" y="1.500" width="29" height="20" rx="2" fill="none" stroke="#55595f" strokeWidth="2.400" /><path d="M10 27h12M16 22v5" stroke="#55595f" strokeWidth="3.500" /></svg>
      </StatusSlot>
      <StatusSlot $w={54}>
        <svg width="52" height="26" viewBox="0 0 52 26"><rect x="1" y="1" width="45" height="24" rx="7" fill="none" stroke="#85898e" strokeWidth="2" /><rect x="4" y="4" width="39" height="18" rx="4.500" fill="#1f2227" /><path d="M48 9c4 1 4 7 0 8z" fill="#85898e" /></svg>
      </StatusSlot>
      <StatusSlot $w={106}><StatusTile>拼</StatusTile></StatusSlot>
      <StatusSlot $w={42}><MdWifi size={38} /></StatusSlot>
      <StatusSlot $w={92}>
        <svg width="28" height="28" viewBox="0 0 28 28"><circle cx="12" cy="11.500" r="9" fill="none" stroke="#1f2227" strokeWidth="2.600" /><path d="M18.500 18.500 26 26.500" stroke="#1f2227" strokeWidth="3" /></svg>
      </StatusSlot>
      <StatusSlot $w={38}>
        <svg width="28" height="26" viewBox="0 0 28 26"><rect x="1" y="1" width="26" height="10" rx="5" fill="none" stroke="#3a3d42" strokeWidth="2" /><circle cx="6.500" cy="6" r="3.500" fill="#3a3d42" /><rect y="14" width="28" height="12" rx="6" fill="#3a3d42" /><circle cx="22" cy="20" r="3.800" fill="#dcebf8" /></svg>
      </StatusSlot>
      <StatusSlot $w={86}>
        <svg width="28" height="28" viewBox="0 0 28 28">
          <defs>
            <linearGradient id="siri" x1="0" y1="0.3" x2="1" y2="0.7"><stop offset="0" stopColor="#d6457f" /><stop offset="0.4" stopColor="#9b6fae" /><stop offset="0.7" stopColor="#4bb8a8" /><stop offset="1" stopColor="#3f58b8" /></linearGradient>
            <radialGradient id="siri-glow"><stop offset="0" stopColor="#fff" /><stop offset="1" stopColor="#fff" stopOpacity="0" /></radialGradient>
          </defs>
          <circle cx="14" cy="14" r="14" fill="url(#siri)" />
          <circle cx="14" cy="14" r="9" fill="url(#siri-glow)" />
        </svg>
      </StatusSlot>
      <Clock>7月10日 周一 11:03</Clock>
    </StatusGroup>
  </MenuBar>
);

const BrowserChrome = () => (
  <>
    <TabStrip>
      <Lights><Light $color="#ec6a5e" /><Light $color="#f4bf4f" /><Light $color="#61c554" /></Lights>
      {tabs.map((t, i) => (
        <TabBox key={i} $active={t.active} $line={!t.active && i !== 8}>
          {t.active && <TabFoot $side="left" width="16" height="16"><path d="M16 0v16H0C9 16 16 9 16 0z" fill="#992a24" /></TabFoot>}
          {t.icon}
          <TabTitle>{t.title}</TabTitle>
          <TabClose><CloseX /></TabClose>
          {t.active && <TabFoot $side="right" width="16" height="16"><path d="M16 0v16H0C9 16 16 9 16 0z" fill="#992a24" /></TabFoot>}
        </TabBox>
      ))}
      <StripButton $ml={34}>
        <svg width="24" height="24" viewBox="0 0 24 24"><path d="M12 0v24M0 12h24" stroke="#fff" strokeWidth="3.400" /></svg>
      </StripButton>
      <StripButton $ml={134}><Chevron size={20} color="#fff" width={3} /></StripButton>
    </TabStrip>
    <Toolbar>
      <NavIcon><svg width="28" height="26" viewBox="0 0 28 26"><path d="M14 1 2 13l12 12M2 13h25" fill="none" stroke="#fff" strokeWidth="3" /></svg></NavIcon>
      <NavIcon><svg width="28" height="26" viewBox="0 0 28 26"><path d="M14 1l12 12-12 12M26 13H1" fill="none" stroke="#c4837f" strokeWidth="3" /></svg></NavIcon>
      <NavIcon><svg width="28" height="28" viewBox="0 0 28 28"><path d="M24.500 18A11.500 11.500 0 1 1 23 7" fill="none" stroke="#fff" strokeWidth="3" /><path d="M27 1v11H16z" fill="#fff" /></svg></NavIcon>
      <AddressBar>
        <MdLock size={25} color="#bfc3c7" />
        <span>okx.com<em>/cn/balance/overview</em></span>
        <AddressActions>
          <svg width="32" height="32" viewBox="0 0 32 32" fill="none" stroke="#c9c9cb" strokeWidth="2.200"><path d="M11 12H6v17h20V12h-5M16 21V3M10.500 8 16 2.500 21.500 8" /></svg>
          <MdStarBorder size={34} color="#c9c9cb" />
        </AddressActions>
      </AddressBar>
      <ToolIcon $w={36}><MdExtension size={34} /></ToolIcon>
      <ToolIcon $w={90}><MdQueueMusic size={40} /></ToolIcon>
      <ToolIcon $w={40}>
        <svg width="28" height="28" viewBox="0 0 28 28"><path d="M0 0h28v28H0zM4 5v18h13V5z" fill="#fff" fillRule="evenodd" /></svg>
      </ToolIcon>
      <ToolIcon $w={22} />
      <Avatar>F</Avatar>
      <UpdatePill>
        更新
        <svg width="6" height="26" viewBox="0 0 6 26" fill="#f6dad8"><circle cx="3" cy="3" r="2.800" /><circle cx="3" cy="13" r="2.800" /><circle cx="3" cy="23" r="2.800" /></svg>
      </UpdatePill>
    </Toolbar>
    <BookmarkBar>
      {bookmarks.map(([icon, label, w], i) => <Bookmark key={i} $w={w}>{icon}{label}</Bookmark>)}
      <Bookmark $w={30}>»</Bookmark>
    </BookmarkBar>
  </>
);

const Header = () => (
  <SiteHeader>
    <Checker size={48} />
    <BrandName>欧易</BrandName>
    <Switch><SwitchOption $on>交易所</SwitchOption><SwitchOption>Web3 钱包</SwitchOption></Switch>
    <HeaderRule $ml={40} $mr={40} />
    {links.map(([label, w, arrow]) => (
      <HeaderLink key={label} $w={w}>{label}{arrow && <Chevron />}</HeaderLink>
    ))}
    <Spacer />
    <HeaderLink $w={152} $gap={20}>资产管理<Chevron /></HeaderLink>
    <HeaderIcon $w={128}>
      <svg width="36" height="40" viewBox="0 0 36 40" fill="none" stroke="#fff" strokeWidth="3"><ellipse cx="18" cy="11.500" rx="9" ry="10" /><path d="M3 33c0-6 4-9 8-9 5 3 9 3 14 0 4 0 8 3 8 9 0 3-1 5-4 5H7c-3 0-4-2-4-5z" /></svg>
    </HeaderIcon>
    <HeaderRule $ml={-4} $mr={19} />
    <HeaderIcon $w={80}>
      <svg width="36" height="40" viewBox="0 0 36 40" fill="none" stroke="#fff" strokeWidth="3"><path d="M10 3H6C3 3 2 4 2 7v27c0 2 1 4 4 4h24c3 0 4-2 4-4V7c0-3-1-4-4-4h-4M18 1v26M10 19l8 8 8-8" /></svg>
    </HeaderIcon>
    <HeaderIcon $w={79}>
      <svg width="36" height="40" viewBox="0 0 36 40" fill="none" stroke="#fff" strokeWidth="3"><path d="M6 31V15C6 7 11 3 18 3s12 4 12 12v16l3 2H3zM13 38h10" /></svg>
    </HeaderIcon>
    <HeaderIcon $w={80}>
      <svg width="36" height="40" viewBox="0 0 36 40" fill="none" stroke="#fff" strokeWidth="3"><path d="M3 28V17C3 8 9 3 18 3s15 5 15 14v14c0 5-4 7-11 7M3 18h7v13H6c-2 0-3-1-3-3zM33 18h-7v13h7" /></svg>
    </HeaderIcon>
    <HeaderIcon $w={81}>
      <svg width="40" height="40" viewBox="0 0 40 40" fill="none" stroke="#fff" strokeWidth="3"><circle cx="20" cy="20" r="18" /><ellipse cx="20" cy="20" rx="8.500" ry="18" /><path d="M2 20h36" /></svg>
    </HeaderIcon>
    <HeaderIcon $w={32} />
  </SiteHeader>
);

const Money = ({ children }: { children: React.ReactNode }) => <><Tugrik>₮</Tugrik>{children}</>;

const Overview = () => (
  <OverviewCard>
    <OverviewTop>
      <div>
        <TitleRow>
          总资产估值
          <svg width="32" height="24" viewBox="0 0 32 24"><path d="M0 12C4 4 9 1 16 1s12 3 16 11c-4 8-9 11-16 11S4 20 0 12z" fill="#9aa0b4" /><circle cx="16" cy="12" r="7.500" fill="#fff" /><circle cx="16" cy="12" r="4.500" fill="#9aa0b4" /></svg>
        </TitleRow>
        <AmountRow>
          <Amount><Money>105.82</Money></Amount>
          <CurrencySelect>USDT<Chevron size={22} color="#8c8c8c" /></CurrencySelect>
        </AmountRow>
        <Change><span>+ <Money>7.64 (7.78%)</Money></span> <span>今日</span></Change>
      </div>
      <Actions>
        <ActionButton $primary $w={126}>充币</ActionButton>
        <ActionButton $w={126}>闪兑</ActionButton>
        <ActionButton $w={126}>提币</ActionButton>
        <ActionButton $w={132}>资金划转</ActionButton>
      </Actions>
    </OverviewTop>
    <Periods>
      <Period $on>1日</Period><Period>1周</Period><Period>1月</Period><Period>半年</Period>
    </Periods>
    <ChartArea><Chart /></ChartArea>
    <Axis>{['13:20', '18:00', '22:40', '03:20', '08:00'].map(t => <span key={t}>{t}</span>)}</Axis>
  </OverviewCard>
);

const Accounts = () => (
  <AccountsCard>
    <CardTitle $pl={64}>资产分布</CardTitle>
    <AccountHead $line>资金账户</AccountHead>
    <AccountHead>交易账户<Chevron size={28} color="#41475a" width={4} dir="up" /></AccountHead>
    <AssetList>
      {assets.map((a, i) => (
        <AssetRow key={a.name} $last={i === assets.length - 1}>
          {a.icon}
          <AssetNames>{a.name}<small>{a.qty}</small></AssetNames>
          <AssetValue><Money>{a.value}</Money></AssetValue>
        </AssetRow>
      ))}
    </AssetList>
    <ViewAll>查看全部<svg width="12" height="20" viewBox="0 0 12 20"><path d="M2 1l8 9-8 9" fill="none" stroke="#2a64f6" strokeWidth="2.600" /></svg></ViewAll>
  </AccountsCard>
);

const Dock = () => (
  <DockBar>
    {dockLeft.map((d, i) => (
      <DockSlot key={i}>{d.icon}{d.badge && <DockBadge>{d.badge}</DockBadge>}{d.on && <RunningDot />}</DockSlot>
    ))}
    <DockRule />
    {dockMid.map((icon, i) => <DockSlot key={i}>{icon}<RunningDot /></DockSlot>)}
    <DockRule />
    {dockRight.map((icon, i) => <DockSlot key={i}>{icon}</DockSlot>)}
  </DockBar>
);

export default function App() {
  return (
    <Desktop>
      <GlobalStyle />
      <TopMenu />
      <Window>
        <BrowserChrome />
        <Header />
        <SubNav>{subnav.map((s, i) => <SubNavItem key={s} $on={i === 0}>{s}</SubNavItem>)}</SubNav>
        <Content>
          <LeftColumn>
            <Overview />
            <DistributionCard><CardTitle $pl={64}>资产分布</CardTitle></DistributionCard>
          </LeftColumn>
          <Accounts />
          <ChatBubble>
            <svg width="46" height="46" viewBox="0 0 46 46"><path d="M0.500 4h45v41L31 33.500H0.500z" fill="#fff" /><g fill="#1f4af7"><circle cx="12" cy="19" r="3.400" /><circle cx="23" cy="19" r="3.400" /><circle cx="34" cy="19" r="3.400" /></g></svg>
          </ChatBubble>
        </Content>
      </Window>
      <Dock />
    </Desktop>
  );
}
